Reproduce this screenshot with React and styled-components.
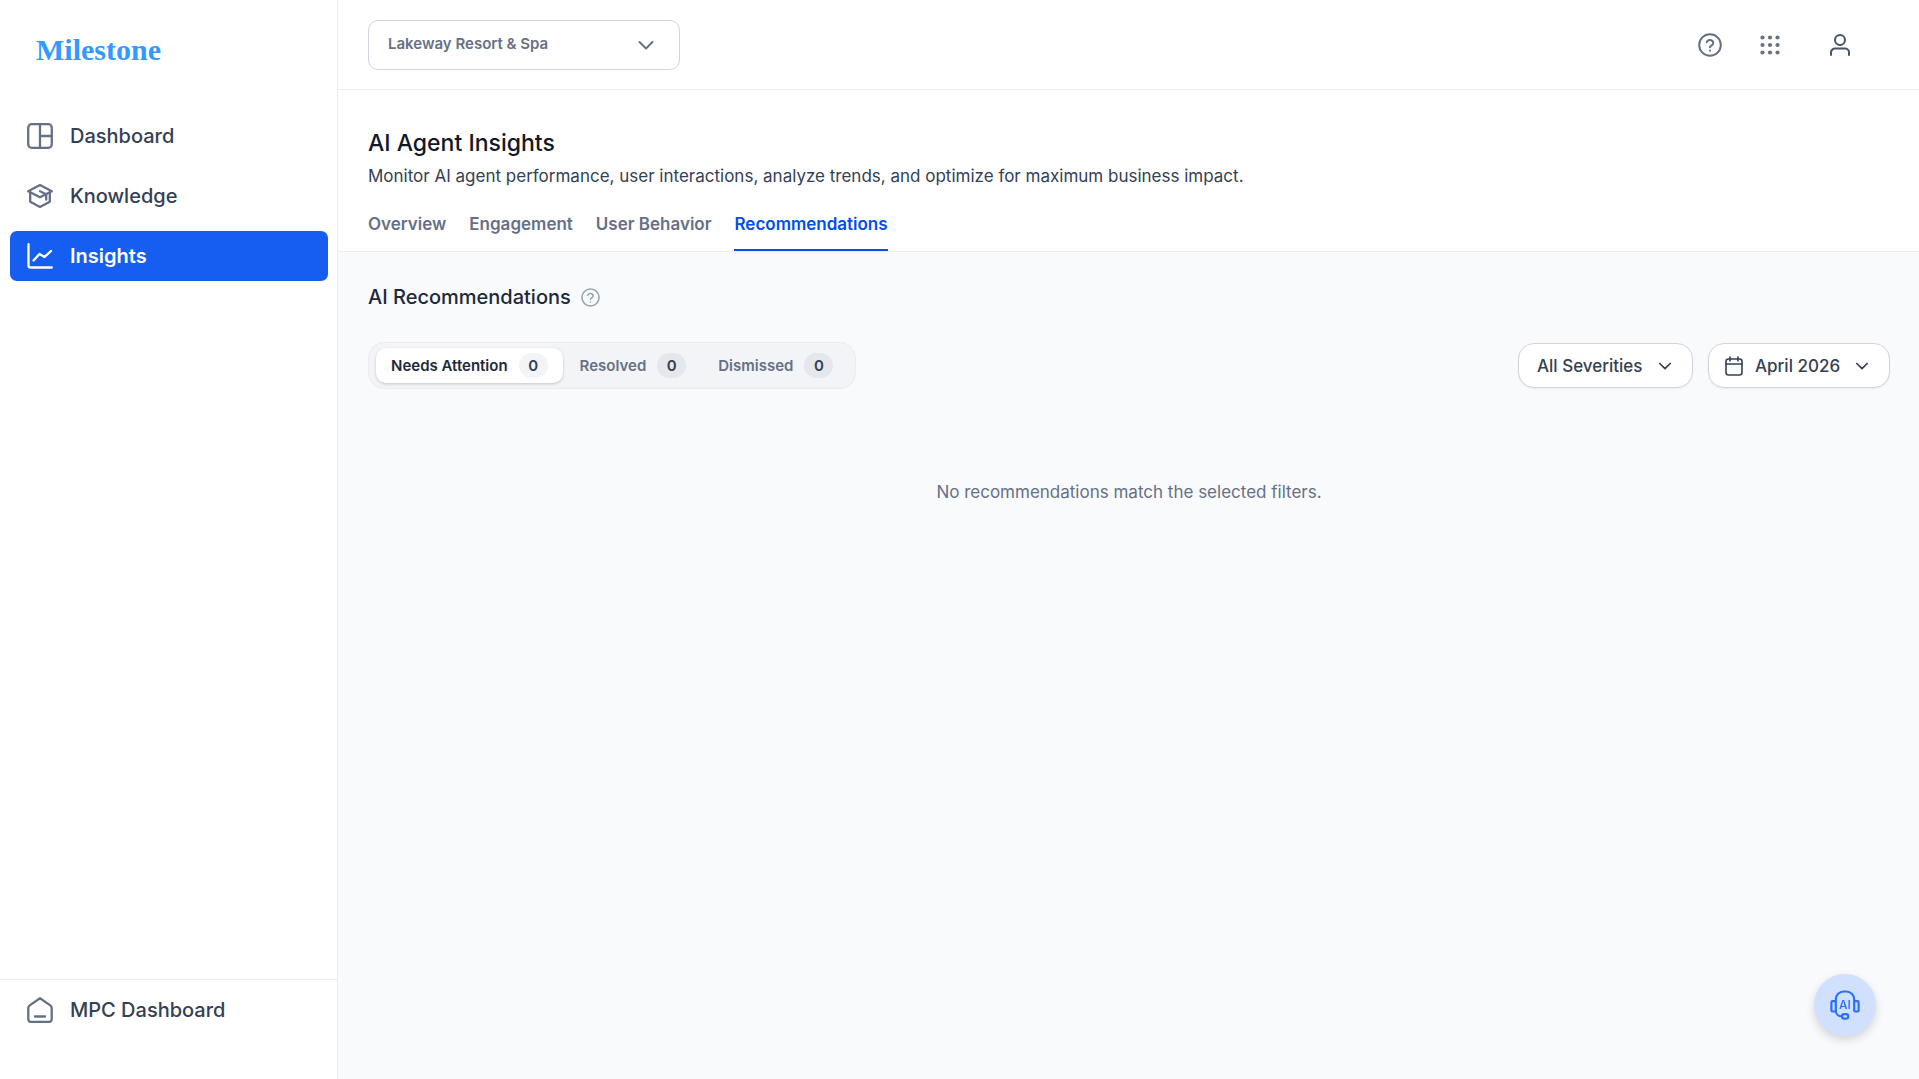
import React, { useState } from "react"
import styled, { createGlobalStyle } from "styled-components"

const GlobalStyle = createGlobalStyle`
  * {
    box-sizing: border-box;
  }

  body {
    margin: 0;
    font-family: Inter, "Liberation Sans", sans-serif;
    color: #344054;
    background: #fff;
  }

  h1, h2, p {
    margin: 0;
  }

  button, select {
    font: inherit;
    color: inherit;
  }

  svg {
    display: block;
    flex: none;
  }
`

const Layout = styled.div`
  display: grid;
  grid-template-columns: 338px 1fr;
  min-height: 100vh;
`

const Sidebar = styled.aside`
  display: flex;
  flex-direction: column;
  border-right: 1px solid #eaecf0;
`

const Logo = styled.a`
  padding: 26px 36px 0;
  height: 111px;
  font-family: "Liberation Serif", serif;
  font-size: 30px;
  font-weight: 700;
  line-height: 48px;
  color: #3399ff;
  text-decoration: none;
`

const Nav = styled.nav`
  display: grid;
  gap: 10px;
  padding: 0 9px 0 10px;
`

const NavLink = styled.a`
  display: flex;
  align-items: center;
  gap: 17px;
  height: 50px;
  padding: 0 17px;
  border-radius: 7px;
  font-size: 20px;
  font-weight: ${props => (props.$active ? 600 : 500)};
  color: ${props => (props.$active ? "#fff" : "#344054")};
  background: ${props => (props.$active ? "#155eef" : "transparent")};
  text-decoration: none;

  svg {
    color: ${props => (props.$active ? "#fff" : "#667085")};
  }
`

const SidebarFooter = styled.div`
  margin-top: auto;
  padding: 5px 9px 44px 10px;
  border-top: 1px solid #eaecf0;
`

const Page = styled.div`
  display: flex;
  flex-direction: column;
  min-width: 0;
`

const TopBar = styled.header`
  display: flex;
  align-items: center;
  justify-content: space-between;
  height: 90px;
  padding: 0 54px 0 30px;
  border-bottom: 1px solid #eaecf0;
`

const Dropdown = styled.label`
  display: grid;
  align-items: center;
  background: #fff;
  border: 1px solid #d0d5dd;

  > * {
    grid-area: 1 / 1;
  }

  select {
    height: 100%;
    width: 100%;
    appearance: none;
    border: 0;
    background: transparent;
    outline: none;
    cursor: pointer;
  }

  svg {
    pointer-events: none;
  }

  svg:last-child {
    justify-self: end;
  }
`

const PropertySelect = styled(Dropdown)`
  width: 312px;
  height: 50px;
  border-radius: 10px;
  font-size: 15px;
  font-weight: 600;
  color: #667085;

  select {
    padding: 0 60px 2px 19px;
  }

  svg:last-child {
    margin-right: 21px;
  }
`

const FilterSelect = styled(Dropdown)`
  width: ${props => (props.$wide ? 182 : 175)}px;
  height: 45px;
  border-radius: 16px;
  font-size: 17px;
  font-weight: 500;
  box-shadow: 0 1px 2px rgba(16, 24, 40, 0.06);

  select {
    padding: 0 40px 0 ${props => (props.$wide ? 46 : 18)}px;
  }

  svg:first-child {
    margin-left: 15px;
  }

  svg:last-child {
    margin-right: 19px;
  }
`

const TopActions = styled.div`
  display: flex;
  align-items: center;
  gap: 30px;
`

const IconButton = styled.button`
  display: grid;
  place-items: center;
  width: ${props => (props.$wide ? 50 : 30)}px;
  height: 30px;
  padding: 0;
  border: 0;
  background: none;
  color: ${props => props.$color || "#667085"};
  cursor: pointer;
`

const PageHeader = styled.div`
  padding: 37px 30px 0;
  border-bottom: 1px solid #eaecf0;
`

const Title = styled.h1`
  font-size: 23px;
  line-height: 32px;
  font-weight: 500;
  color: #101828;
`

const Description = styled.p`
  padding-top: 4px;
  font-size: 17px;
  line-height: 26px;
`

const Tabs = styled.nav`
  display: flex;
  gap: 23px;
  margin-top: 20px;
`

const Tab = styled.a`
  height: 42px;
  padding-top: 2px;
  font-size: 17px;
  line-height: 26px;
  font-weight: 600;
  text-decoration: none;
  color: ${props => (props.$active ? "#004eeb" : "#667085")};
  border-bottom: 2px solid ${props => (props.$active ? "#004eeb" : "transparent")};
`

const Content = styled.main`
  flex: 1;
  padding: 30px 29px 30px 30px;
  background: #f9fafc;
`

const SectionTitle = styled.div`
  display: flex;
  align-items: center;
  gap: 5px;

  h2 {
    font-size: 20px;
    line-height: 30px;
    font-weight: 500;
    color: #1d2939;
  }
`

const Toolbar = styled.div`
  display: flex;
  align-items: center;
  justify-content: space-between;
  margin-top: 30px;
`

const Segments = styled.div`
  display: flex;
  gap: 2px;
  padding: 5px 7px;
  border: 1px solid #eaecf0;
  border-radius: 16px;
  background: #f2f4f7;
`

const Segment = styled.button`
  display: flex;
  align-items: center;
  gap: 11px;
  height: 35px;
  padding: 0 15px;
  border: 0;
  border-radius: 10px;
  font-size: 15px;
  font-weight: 600;
  color: ${props => (props.$active ? "#1d2939" : "#667085")};
  background: ${props => (props.$active ? "#fff" : "transparent")};
  box-shadow: ${props => (props.$active ? "0 1px 3px rgba(16, 24, 40, 0.2)" : "none")};
  cursor: pointer;
`

const Count = styled.span`
  width: 29px;
  border-radius: 13px;
  line-height: 25px;
  text-align: center;
  color: #344054;
  background: ${props => (props.$active ? "#f2f4f7" : "#e4e7ec")};
`

const Filters = styled.div`
  display: flex;
  gap: 15px;
`

const EmptyState = styled.p`
  padding: 90px 0;
  font-size: 17px;
  line-height: 26px;
  text-align: center;
  color: #667085;
`

const ChatButton = styled.button`
  position: fixed;
  right: 43px;
  bottom: 43px;
  display: grid;
  place-items: center;
  width: 62px;
  height: 62px;
  padding: 0;
  border: 0;
  border-radius: 50%;
  color: #2970ff;
  background: #d1e0ff;
  box-shadow: 0 4px 8px rgba(16, 24, 40, 0.16);
  cursor: pointer;
`

const Icon = ({ size = 26, box = 26, stroke = 2.3, children }) => (
  <svg
    width={size}
    height={size}
    viewBox={`0 0 ${box} ${box}`}
    fill="none"
    stroke="currentColor"
    strokeWidth={stroke}
    strokeLinecap="round"
    strokeLinejoin="round"
    aria-hidden="true"
  >
    {children}
  </svg>
)

const DashboardIcon = () => (
  <Icon>
    <rect x="1.2" y="1.2" width="23.6" height="23.6" rx="3.5" />
    <path d="M13 1.2v23.6M13 13h11.8" />
  </Icon>
)

const KnowledgeIcon = () => (
  <Icon>
    <path d="M1.2 8.2 13 2l11.800 6.2L13 14.2z" />
    <path d="M3.2 9.500v9.300L13 24l9.800-5.200V9.500" />
    <path d="M13 8.2l6.200 3v5.500" />
  </Icon>
)

const InsightsIcon = () => (
  <Icon>
    <path d="M1.500 1.200v21.300a2 2 0 0 0 2 2H24.800" />
    <path d="M6.500 17.500 12.500 11l5 3L24 8" />
  </Icon>
)

const HomeIcon = () => (
  <Icon>
    <path d="M13 1.200 23.300 8.400a3 3 0 0 1 1.400 2.500v11.400a2.500 2.500 0 0 1-2.500 2.500H3.800a2.500 2.500 0 0 1-2.500-2.500V10.900a3 3 0 0 1 1.400-2.500z" />
    <path d="M8 19.500h10" />
  </Icon>
)

const HelpIcon = ({ size, stroke }) => (
  <Icon size={size} box={24} stroke={stroke}>
    <circle cx="12" cy="12" r="10.800" />
    <path d="M8.700 9.200a3.400 3.400 0 0 1 6.600.9c0 2.200-3.300 2.600-3.300 4.200" />
    <path d="M12 17.600v.1" />
  </Icon>
)

const AppsIcon = () => (
  <svg width="20" height="20" viewBox="0 0 20 20" fill="currentColor" aria-hidden="true">
    {[2.5, 10, 17.5].map(y =>
      [2.5, 10, 17.5].map(x => <circle key={`${x}-${y}`} cx={x} cy={y} r="2.1" />)
    )}
  </svg>
)

const UserIcon = () => (
  <Icon size={22} box={22} stroke={2}>
    <circle cx="11" cy="6" r="5" />
    <path d="M2 21v-2.500a4 4 0 0 1 4-4h10a4 4 0 0 1 4 4V21" />
  </Icon>
)

const ChevronDown = () => (
  <Icon size={24} box={24} stroke={2}>
    <path d="M5.500 9 12 15.500 18.500 9" />
  </Icon>
)

const ChevronSmall = () => (
  <Icon size={16} box={16} stroke={1.7}>
    <path d="M2.800 5.500 8 10.700 13.200 5.500" />
  </Icon>
)

const CalendarIcon = () => (
  <Icon size={20} box={20} stroke={1.6}>
    <rect x="2" y="3" width="16" height="16" rx="2.500" />
    <path d="M2 8h16M6 1v4M14 1v4" />
  </Icon>
)

const AgentIcon = () => (
  <svg width="30" height="30" viewBox="0 0 30 30" fill="none" stroke="currentColor" strokeWidth="2.200" strokeLinejoin="round" aria-hidden="true">
    <path d="M5.800 21.500V9.500a8 8 0 0 1 8-8h2.400a8 8 0 0 1 8 8V21.500" />
    <path d="M5.800 11.200H2.600a1.200 1.200 0 0 0-1.200 1.200v7.900a1.200 1.200 0 0 0 1.200 1.200h3.200M24.200 11.200h3.200a1.200 1.200 0 0 1 1.200 1.200v7.900a1.200 1.200 0 0 1-1.200 1.200h-3.200" />
    <path d="M5.800 20.500c0 3.500 2.500 6 6.200 6" />
    <rect x="12" y="24.200" width="6.200" height="4.400" rx="2.200" />
    <text x="15" y="18.800" fontSize="12" fontWeight="500" textAnchor="middle" fill="currentColor" stroke="none">AI</text>
  </svg>
)

const pages = ["Overview", "Engagement", "User Behavior", "Recommendations"]
const statuses = ["Needs Attention", "Resolved", "Dismissed"]

const App = () => {
  const [page, setPage] = useState("Recommendations")
  const [status, setStatus] = useState("Needs Attention")

  return (
    <>
      <GlobalStyle />
      <Layout>
        <Sidebar>
          <Logo href="#home">Milestone</Logo>
          <Nav>
            <NavLink href="#dashboard">
              <DashboardIcon />
              Dashboard
            </NavLink>
            <NavLink href="#knowledge">
              <KnowledgeIcon />
              Knowledge
            </NavLink>
            <NavLink href="#insights" $active>
              <InsightsIcon />
              Insights
            </NavLink>
          </Nav>
          <SidebarFooter>
            <NavLink href="#mpc">
              <HomeIcon />
              MPC Dashboard
            </NavLink>
          </SidebarFooter>
        </Sidebar>

        <Page>
          <TopBar>
            <PropertySelect>
              <select aria-label="Property">
                <option>Lakeway Resort &amp; Spa</option>
              </select>
              <ChevronDown />
            </PropertySelect>
            <TopActions>
              <IconButton aria-label="Help">
                <HelpIcon size={24} stroke={2} />
              </IconButton>
              <IconButton aria-label="Apps">
                <AppsIcon />
              </IconButton>
              <IconButton aria-label="Account" $color="#475467" $wide>
                <UserIcon />
              </IconButton>
            </TopActions>
          </TopBar>

          <PageHeader>
            <Title>AI Agent Insights</Title>
            <Description>
              Monitor AI agent performance, user interactions, analyze trends, and optimize for
              maximum business impact.
            </Description>
            <Tabs>
              {pages.map(name => (
                <Tab key={name} href="#insights" $active={name === page} onClick={() => setPage(name)}>
                  {name}
                </Tab>
              ))}
            </Tabs>
          </PageHeader>

          <Content>
            <SectionTitle>
              <h2>AI Recommendations</h2>
              <IconButton aria-label="About recommendations" $color="#98a2b3">
                <HelpIcon size={19} stroke={2} />
              </IconButton>
            </SectionTitle>
            <Toolbar>
              <Segments>
                {statuses.map(name => (
                  <Segment key={name} $active={name === status} onClick={() => setStatus(name)}>
                    {name}
                    <Count $active={name === status}>0</Count>
                  </Segment>
                ))}
              </Segments>
              <Filters>
                <FilterSelect>
                  <select aria-label="Severity">
                    <option>All Severities</option>
                  </select>
                  <ChevronSmall />
                </FilterSelect>
                <FilterSelect $wide>
                  <CalendarIcon />
                  <select aria-label="Month">
                    <option>April 2026</option>
                  </select>
                  <ChevronSmall />
                </FilterSelect>
              </Filters>
            </Toolbar>
            <EmptyState>No recommendations match the selected filters.</EmptyState>
          </Content>
        </Page>
      </Layout>
      <ChatButton aria-label="Open AI assistant">
        <AgentIcon />
      </ChatButton>
    </>
  )
}

export default App
